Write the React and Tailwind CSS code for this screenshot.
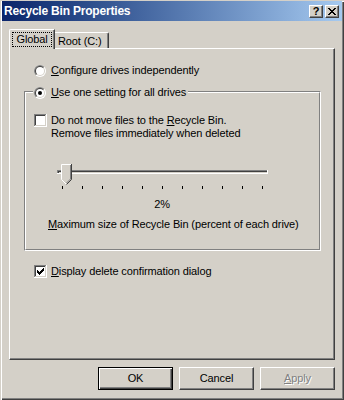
import React from 'react';

const font = { fontFamily: '"Liberation Sans", Arial, sans-serif' };

const Radio = ({ checked, id }) => (
  <svg width="12" height="12" viewBox="0 0 12 12" className="shrink-0">
    <defs>
      <clipPath id={id}>
        <polygon points="0,0 12,0 0,12" />
      </clipPath>
    </defs>
    <circle cx="6" cy="6" r="6" fill="#ffffff" />
    <circle cx="6" cy="6" r="6" fill="#808080" clipPath={`url(#${id})`} />
    <circle cx="6" cy="6" r="5" fill="#d4d0c8" />
    <circle cx="6" cy="6" r="5" fill="#404040" clipPath={`url(#${id})`} />
    <circle cx="6" cy="6" r="4" fill="#ffffff" />
    {checked && <circle cx="6" cy="6" r="2" fill="#000000" />}
  </svg>
);

const CheckBox = ({ checked }) => (
  <svg width="13" height="13" viewBox="0 0 13 13" shapeRendering="crispEdges" className="shrink-0">
    <rect x="0" y="0" width="13" height="13" fill="#ffffff" />
    <rect x="0" y="0" width="12" height="1" fill="#808080" />
    <rect x="0" y="0" width="1" height="12" fill="#808080" />
    <rect x="1" y="1" width="10" height="1" fill="#404040" />
    <rect x="1" y="1" width="1" height="10" fill="#404040" />
    <rect x="1" y="11" width="11" height="1" fill="#d4d0c8" />
    <rect x="11" y="1" width="1" height="11" fill="#d4d0c8" />
    {checked && (
      <g fill="#000000">
        <rect x="9" y="3" width="1" height="1" />
        <rect x="8" y="4" width="2" height="1" />
        <rect x="3" y="5" width="1" height="1" />
        <rect x="7" y="5" width="3" height="1" />
        <rect x="3" y="6" width="2" height="1" />
        <rect x="6" y="6" width="3" height="1" />
        <rect x="3" y="7" width="5" height="1" />
        <rect x="4" y="8" width="3" height="1" />
        <rect x="5" y="9" width="1" height="1" />
      </g>
    )}
  </svg>
);

const Slider = () => {
  const ticks = [];
  for (let i = 0; i <= 10; i++) ticks.push(6 + i * 20);
  return (
    <svg width="212" height="27" viewBox="0 0 212 27" shapeRendering="crispEdges" className="block">
      {/* track */}
      <rect x="1" y="7" width="211" height="4" fill="#ffffff" />
      <rect x="1" y="7" width="210" height="1" fill="#808080" />
      <rect x="1" y="7" width="1" height="3" fill="#808080" />
      <rect x="2" y="8" width="209" height="1" fill="#404040" />
      <rect x="2" y="8" width="1" height="2" fill="#404040" />
      <rect x="3" y="9" width="208" height="1" fill="#d4d0c8" />
      {/* thumb */}
      <polygon points="5,1 16,1 16,16 10.5,21.5 5,16" fill="#d4d0c8" shapeRendering="auto" />
      <polyline points="5.5,16.5 5.5,1.5 15,1.5" fill="none" stroke="#ffffff" strokeWidth="1" shapeRendering="auto" />
      <line x1="5.5" y1="16.5" x2="10.5" y2="21.5" stroke="#ffffff" strokeWidth="1" shapeRendering="auto" />
      <polyline points="15.5,1 15.5,16.5 10.5,21.5" fill="none" stroke="#404040" strokeWidth="1" shapeRendering="auto" />
      <polyline points="14.5,2 14.5,16 10.5,20" fill="none" stroke="#808080" strokeWidth="1" shapeRendering="auto" />
      {/* ticks */}
      {ticks.map((x) => (
        <rect key={x} x={x} y="23" width="1" height="3" fill="#000000" />
      ))}
    </svg>
  );
};

const Button = ({ children, isDefault, disabled }) => (
  <div
    className={
      isDefault
        ? 'w-[75px] h-[23px] border border-black shadow-[inset_1px_1px_0_#ffffff,inset_-1px_-1px_0_#404040,inset_-2px_-2px_0_#808080] flex items-center justify-center text-[11px] text-black'
        : 'w-[75px] h-[23px] border border-t-white border-l-white border-r-[#404040] border-b-[#404040] shadow-[inset_-1px_-1px_0_#808080] flex items-center justify-center text-[11px] text-black'
    }
  >
    <span className={disabled ? 'text-[#808080] [text-shadow:1px_1px_0_#ffffff]' : ''}>{children}</span>
  </div>
);

const TitleButton = ({ children }) => (
  <div className="w-[14px] h-[13px] bg-[#d4d0c8] border border-t-white border-l-white border-r-[#404040] border-b-[#404040] shadow-[inset_-1px_-1px_0_#808080] flex items-center justify-center">
    {children}
  </div>
);

export default function App() {
  return (
    <div
      className="w-[344px] h-[400px] bg-[#d4d0c8] overflow-hidden text-[11px] leading-[13px] tracking-[-0.12px] text-black shadow-[inset_1px_1px_0_#d4d0c8,inset_2px_2px_0_#ffffff,inset_-1px_-1px_0_#404040,inset_-2px_-2px_0_#808080]"
      style={font}
    >
      {/* Title bar */}
      <div className="mt-[1px] mx-[2px] h-[20px] bg-linear-to-r from-[#0a246a] to-[#a6caf0] flex items-center justify-between">
        <span className="pl-[2px] text-white font-bold text-[12px] tracking-[-0.2px]">Recycle Bin Properties</span>
        <div className="flex gap-[2px] mr-[3px]">
          <TitleButton>
            <span className="font-bold text-[11px] leading-[11px] tracking-normal">?</span>
          </TitleButton>
          <TitleButton>
            <svg width="8" height="7" viewBox="0 0 8 7" shapeRendering="crispEdges">
              <g fill="#000000">
                <rect x="0" y="0" width="2" height="1" />
                <rect x="6" y="0" width="2" height="1" />
                <rect x="1" y="1" width="2" height="1" />
                <rect x="5" y="1" width="2" height="1" />
                <rect x="2" y="2" width="4" height="1" />
                <rect x="3" y="3" width="2" height="1" />
                <rect x="2" y="4" width="4" height="1" />
                <rect x="1" y="5" width="2" height="1" />
                <rect x="5" y="5" width="2" height="1" />
                <rect x="0" y="6" width="2" height="1" />
                <rect x="6" y="6" width="2" height="1" />
              </g>
            </svg>
          </TitleButton>
        </div>
      </div>

      {/* Tabs */}
      <div className="mt-[8px] ml-[9px] h-[19px] flex items-end">
        <div className="relative z-10 w-[46px] h-[20px] -mb-[1px] bg-[#d4d0c8] border-t border-l border-white rounded-tl-[2px] shadow-[inset_-1px_0_0_#808080] border-r border-r-[#404040] pt-[2px] pl-[2px]">
          <span className="inline-block w-[40px] border border-dotted border-black text-center">Global</span>
        </div>
        <div className="w-[54px] h-[16px] border-t border-white border-r border-r-[#404040] shadow-[inset_-1px_0_0_#808080] rounded-tr-[2px] pt-[2px] pl-[3px]">
          Root (C:)
        </div>
      </div>

      {/* Panel */}
      <div className="ml-[9px] w-[326px] h-[312px] border border-t-white border-l-white border-r-[#404040] border-b-[#404040] shadow-[inset_-1px_-1px_0_#808080] flex flex-col">
        <div className="mt-[15px] ml-[24px] h-[13px] flex items-center gap-[5px]">
          <Radio id="r1" />
          <span>
            <u>C</u>onfigure drives independently
          </span>
        </div>

        {/* Group box */}
        <div className="mt-[14px] ml-[14px] w-[297px] h-[160px] border border-t-[#808080] border-l-[#808080] border-r-white border-b-white">
          <div className="h-full border border-t-white border-l-white border-r-[#808080] border-b-[#808080] flex flex-col">
            <div className="-mt-[7px] ml-[7px] w-fit h-[13px] bg-[#d4d0c8] flex items-center gap-[5px] pl-[1px] pr-[2px]">
              <Radio id="r2" checked />
              <span>
                <u>U</u>se one setting for all drives
              </span>
            </div>

            <div className="mt-[15px] ml-[8px] flex items-start gap-[4px]">
              <CheckBox />
              <span>
                Do not move files to the <u>R</u>ecycle Bin.
                <br />
                Remove files immediately when deleted
              </span>
            </div>

            <div className="mt-[23px] ml-[30px]">
              <Slider />
            </div>

            <div className="mt-[8px] ml-[30px] w-[212px] text-center">2%</div>

            <div className="mt-[7px] ml-[22px]">
              <u>M</u>aximum size of Recycle Bin (percent of each drive)
            </div>
          </div>
        </div>

        <div className="mt-[14px] ml-[24px] h-[13px] flex items-center gap-[4px]">
          <CheckBox checked />
          <span>
            <u>D</u>isplay delete confirmation dialog
          </span>
        </div>
      </div>

      {/* Buttons */}
      <div className="mt-[7px] ml-[9px] w-[326px] flex justify-end gap-[6px]">
        <Button isDefault>OK</Button>
        <Button>Cancel</Button>
        <Button disabled>
          <u>A</u>pply
        </Button>
      </div>
    </div>
  );
}
